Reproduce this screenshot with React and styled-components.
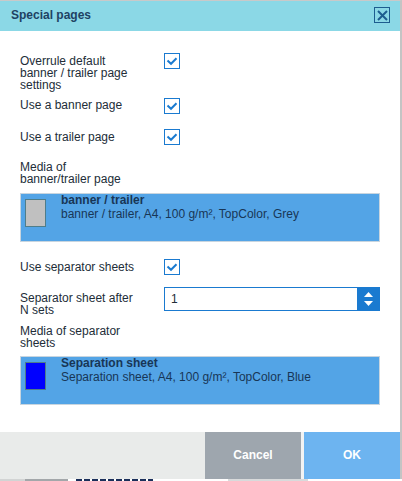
import React from "react";
import styled, { createGlobalStyle } from "styled-components";

const GlobalStyle = createGlobalStyle`
  html, body {
    margin: 0;
    padding: 0;
    background: #fff;
  }
  body {
    font-family: "Liberation Sans", Arial, sans-serif;
  }
`;

const Dialog = styled.div`
  width: 400px;
  border-top: 1px solid #c9c9c9;
  border-right: 2px solid #c4c4c4;
  background: #fff;
`;

const Header = styled.div`
  height: 30px;
  box-sizing: border-box;
  display: flex;
  align-items: center;
  justify-content: space-between;
  padding: 0 10px 2px 11px;
  background: #8bd8e6;
`;

const Title = styled.h1`
  margin: 0;
  font-size: 12px;
  font-weight: bold;
  color: #1e4263;
`;

const CloseButton = styled.button`
  width: 16px;
  height: 16px;
  padding: 0;
  box-sizing: border-box;
  border: 1.5px solid #1d5d8f;
  background: transparent;
  display: flex;
  align-items: center;
  justify-content: center;
  cursor: pointer;
`;

const Body = styled.div`
  display: flex;
  flex-direction: column;
  padding: 0 20px 27px 20px;
`;

const Row = styled.div`
  display: flex;
  align-items: flex-start;
  margin-top: ${(p) => p.$mt}px;
`;

const Label = styled.div`
  flex: 0 0 144px;
  box-sizing: border-box;
  padding: ${(p) => p.$pt ?? 1}px 29px 0 0;
  font-size: 12px;
  line-height: 12px;
  color: #222d38;
`;

const SectionLabel = styled(Label)`
  flex: none;
  width: 144px;
  margin-top: ${(p) => p.$mt}px;
  padding-top: 0;
`;

const Checkbox = styled.span`
  width: 16px;
  height: 16px;
  box-sizing: border-box;
  border: 1px solid #1a7ad0;
  display: flex;
  align-items: center;
  justify-content: center;
  background: #fff;
`;

const MediaBox = styled.div`
  display: flex;
  align-items: flex-start;
  height: 49px;
  box-sizing: border-box;
  margin-top: ${(p) => p.$mt}px;
  padding: 0 4px;
  border: 1px solid #c8d5df;
  background: #53a4e6;
`;

const Swatch = styled.span`
  flex: none;
  width: 21px;
  height: 28px;
  margin-top: 5px;
  box-sizing: border-box;
  border: 1px solid #4f7d8a;
  background: ${(p) => p.$color};
`;

const MediaText = styled.div`
  margin: -1px 0 0 15px;
  font-size: 12px;
  line-height: 14px;
  color: #183656;
`;

const MediaName = styled.div`
  font-weight: bold;
`;

const NumberField = styled.div`
  display: flex;
  width: 216px;
  height: 24px;
  box-sizing: border-box;
  border: 1px solid #1a7ad0;
`;

const NumberValue = styled.span`
  flex: 1;
  padding-left: 6px;
  font-size: 12px;
  line-height: 22px;
  color: #222d38;
`;

const SpinButton = styled.div`
  width: 22px;
  background: #1a7ad0;
  display: flex;
  flex-direction: column;
  align-items: center;
  justify-content: center;
  gap: 4px;
`;

const Footer = styled.div`
  display: flex;
  justify-content: flex-end;
  height: 47px;
  background: #e9ebea;
`;

const FooterButton = styled.button`
  width: 96px;
  padding: 0 0 1px;
  border: 0;
  background: ${(p) => p.$bg};
  color: #fff;
  font-family: "Liberation Sans", Arial, sans-serif;
  font-size: 12px;
  font-weight: bold;
  cursor: pointer;
`;

const Gap = styled.span`
  width: 3px;
  background: #f2f3f3;
`;

/* sliver of the page that sits behind the dialog */
const Backdrop = styled.div`
  display: flex;
  height: 2px;
  overflow: hidden;
`;

const BackdropPart = styled.span`
  flex: none;
  width: ${(p) => p.$w}px;
  margin-left: ${(p) => p.$ml || 0}px;
  background: ${(p) => p.$bg};
`;

const Check = () => (
  <svg width="12" height="10" viewBox="0 0 12 10">
    <path d="M1.5 4.5 L5 7.8 L10.5 2.2" fill="none" stroke="#1a7ad0" strokeWidth="2" />
  </svg>
);

const CheckRow = ({ label, mt, pt }) => (
  <Row $mt={mt}>
    <Label $pt={pt}>{label}</Label>
    <Checkbox>
      <Check />
    </Checkbox>
  </Row>
);

const Media = ({ mt, color, name, details }) => (
  <MediaBox $mt={mt}>
    <Swatch $color={color} />
    <MediaText>
      <MediaName>{name}</MediaName>
      <div>{details}</div>
    </MediaText>
  </MediaBox>
);

export default function App() {
  return (
    <>
      <GlobalStyle />
      <Dialog>
        <Header>
          <Title>Special pages</Title>
          <CloseButton aria-label="Close">
            <svg width="11" height="11" viewBox="0 0 11 11">
              <path d="M1 1 L10 10 M10 1 L1 10" stroke="#1d5d8f" strokeWidth="2" />
            </svg>
          </CloseButton>
        </Header>
        <Body>
          <CheckRow mt={22} pt={2} label="Overrule default banner / trailer page settings" />
          <CheckRow mt={7} label="Use a banner page" />
          <CheckRow mt={15} pt={2} label="Use a trailer page" />
          <SectionLabel $mt={16}>Media of banner/trailer page</SectionLabel>
          <Media
            mt={8}
            color="#c0c0c0"
            name="banner / trailer"
            details="banner / trailer, A4, 100 g/m², TopColor, Grey"
          />
          <CheckRow mt={17} pt={2} label="Use separator sheets" />
          <Row $mt={12}>
            <Label $pt={5}>Separator sheet after N sets</Label>
            <NumberField>
              <NumberValue>1</NumberValue>
              <SpinButton>
                <svg width="9" height="5" viewBox="0 0 9 5">
                  <path d="M4.5 0 L9 5 L0 5 Z" fill="#fff" />
                </svg>
                <svg width="9" height="5" viewBox="0 0 9 5">
                  <path d="M0 0 L9 0 L4.5 5 Z" fill="#fff" />
                </svg>
              </SpinButton>
            </NumberField>
          </Row>
          <SectionLabel $mt={9}>Media of separator sheets</SectionLabel>
          <Media
            mt={7}
            color="#0000ff"
            name="Separation sheet"
            details="Separation sheet, A4, 100 g/m², TopColor, Blue"
          />
        </Body>
        <Footer>
          <FooterButton $bg="#9ea6ae">Cancel</FooterButton>
          <Gap />
          <FooterButton $bg="#6db4f0">OK</FooterButton>
        </Footer>
      </Dialog>
      <Backdrop>
        <BackdropPart $w={25} $bg="#d2d4d4" />
        <BackdropPart $w={43} $bg="#a3a7aa" />
        <BackdropPart
          $w={77}
          $ml={8}
          $bg="repeating-linear-gradient(90deg, #1b2f5a 0 6px, #fff 6px 8px)"
        />
        <BackdropPart $w={80} $ml={75} $bg="#d8dadb" />
      </Backdrop>
    </>
  );
}
